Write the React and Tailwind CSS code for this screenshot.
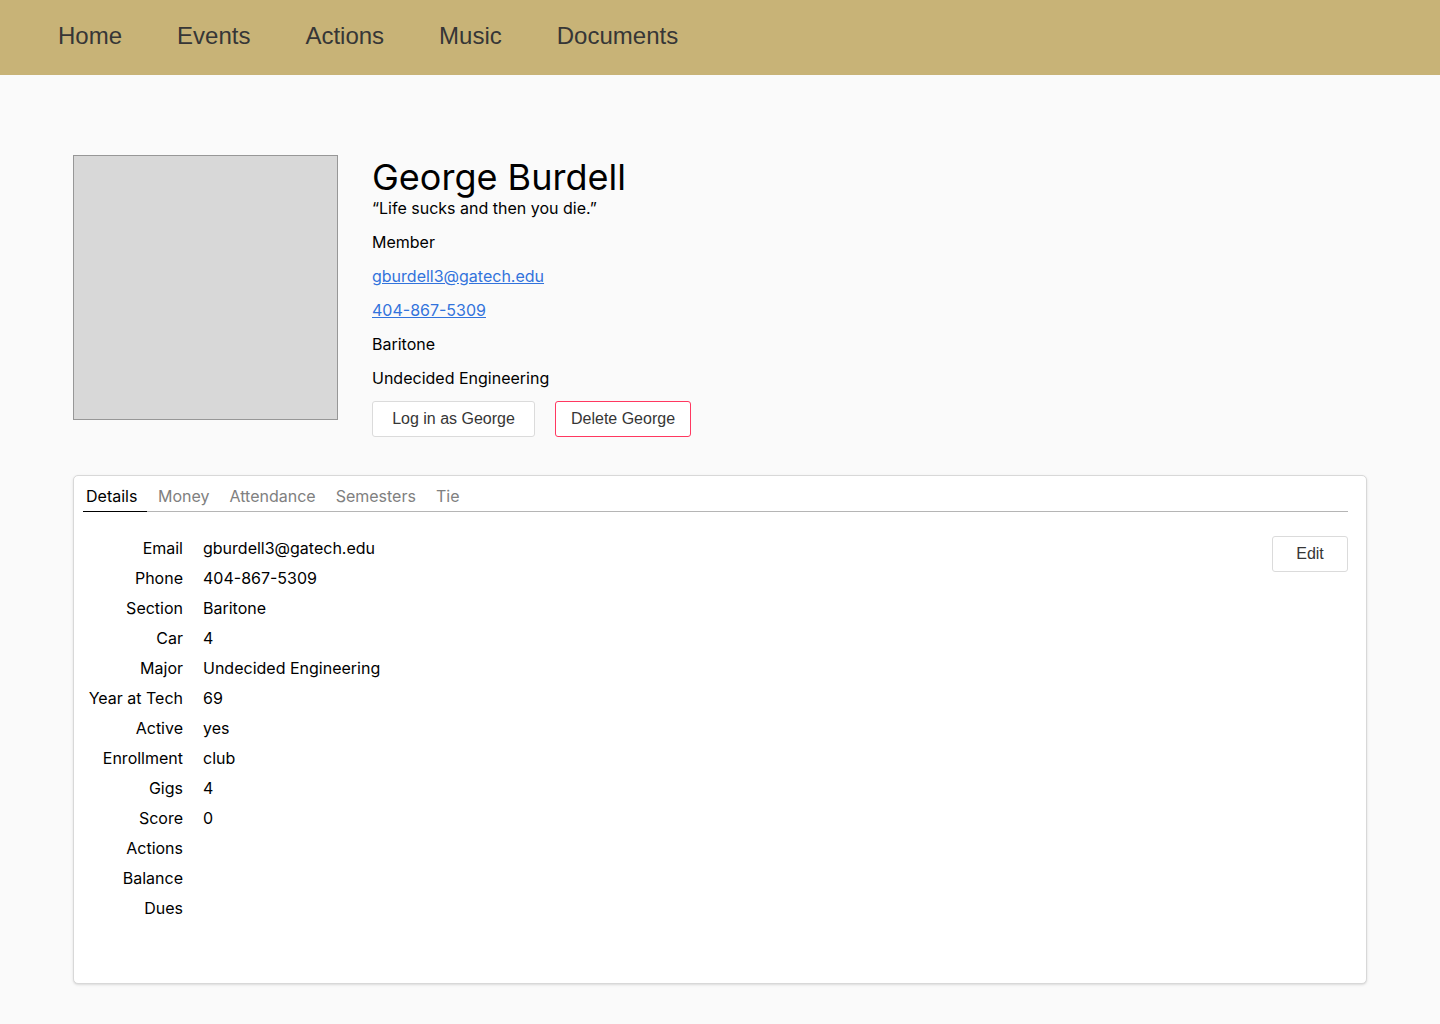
const NAV = ["Home", "Events", "Actions", "Music", "Documents"];
const TABS = ["Money", "Attendance", "Semesters", "Tie"];
const DETAILS = [
  ["Email", "gburdell3@gatech.edu"],
  ["Phone", "404-867-5309"],
  ["Section", "Baritone"],
  ["Car", "4"],
  ["Major", "Undecided Engineering"],
  ["Year at Tech", "69"],
  ["Active", "yes"],
  ["Enrollment", "club"],
  ["Gigs", "4"],
  ["Score", "0"],
  ["Actions", ""],
  ["Balance", ""],
  ["Dues", ""],
];

export default function App() {
  return (
    <div className="min-h-screen bg-[#fafafa] pb-10 font-[Inter,sans-serif] text-base text-black">
      <nav className="flex gap-[55px] bg-[#c8b377] px-[58px] pt-[18px] pb-[21px] font-['Liberation_Sans',sans-serif] text-2xl leading-9 text-[#363636]">
        {NAV.map((n) => (
          <a key={n} href="#">{n}</a>
        ))}
      </nav>
      <main className="px-[73px] pt-20">
        <section className="flex gap-[34px]">
          <div className="size-[265px] shrink-0 border border-[#979797] bg-[#d8d8d8]" />
          <div>
            <h1 className="text-4xl leading-[44px]">George Burdell</h1>
            <p className="leading-[18px]">“Life sucks and then you die.”</p>
            <div className="mt-2 flex flex-col items-start leading-[34px]">
              <span>Member</span>
              <a href="mailto:gburdell3@gatech.edu" className="text-[#3273dc] underline">gburdell3@gatech.edu</a>
              <a href="tel:404-867-5309" className="text-[#3273dc] underline">404-867-5309</a>
              <span>Baritone</span>
              <span>Undecided Engineering</span>
            </div>
            <div className="mt-1.5 flex gap-5 font-['Liberation_Sans',sans-serif] text-[#363636]">
              <button className="h-9 w-[163px] rounded-[3px] border border-[#dbdbdb] bg-white">Log in as George</button>
              <button className="h-9 w-[136px] rounded-[3px] border border-[#ff3860] bg-white">Delete George</button>
            </div>
          </div>
        </section>
        <section className="mt-[38px] min-h-[509px] rounded-[5px] border border-[#d8d8d8] bg-white pt-1 pr-[18px] pl-[9px] shadow-sm">
          <div role="tablist" className="flex h-8 border-b border-[#b5b5b5] text-[#808080]">
            <button role="tab" aria-selected="true" className="-mb-px w-16 border-b border-black pl-[3px] text-left text-black">Details</button>
            <div className="ml-[11px] flex gap-5">
              {TABS.map((t) => (
                <button key={t} role="tab" aria-selected="false">{t}</button>
              ))}
            </div>
          </div>
          <div className="flex items-start justify-between pt-[21px]">
            <dl className="grid grid-cols-[100px_auto] gap-x-5 leading-[30px]">
              {DETAILS.map(([k, v]) => (
                <div key={k} className="contents">
                  <dt className="text-right">{k}</dt>
                  <dd>{v}</dd>
                </div>
              ))}
            </dl>
            <button className="mt-[3px] h-9 w-[76px] rounded-[3px] border border-[#dbdbdb] bg-white font-['Liberation_Sans',sans-serif] text-[#363636]">Edit</button>
          </div>
        </section>
      </main>
    </div>
  );
}
